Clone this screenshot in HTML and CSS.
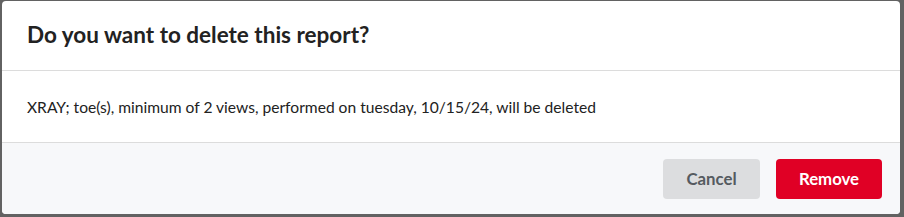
FILE: index.html
```html
<!DOCTYPE html>
<html lang="en">

<head>
    <meta charset="UTF-8" />
    <meta name="viewport" content="width=device-width, initial-scale=1.0" />
    <title>Delete report</title>
    <link rel="stylesheet" href="styles.css">
</head>

<body>
    <div class="modal" role="dialog" aria-labelledby="modalTitle">
        <div class="modal-header">
            <h2 id="modalTitle">Do you want to delete this report?</h2>
        </div>
        <div class="modal-body">
            <p>XRAY; toe(s), minimum of 2 views, performed on tuesday, 10/15/24, will be deleted</p>
        </div>
        <div class="modal-footer">
            <button type="button" class="btn btn-cancel">Cancel</button>
            <button type="button" class="btn btn-remove">Remove</button>
        </div>
    </div>
</body>

</html>
```

FILE: styles.css
```css
* {
    margin: 0;
    padding: 0;
    box-sizing: border-box;
    font-family: Lato, 'Noto Sans', sans-serif;
}

body {
    background: #626262;
    padding: 1px 4px 3px 2px;
    min-height: 100vh;
}

.modal {
    background: #ffffff;
    border-radius: 4px;
    overflow: hidden;
    width: 898px;
    color: #222222;
}

.modal-header {
    height: 70px;
    padding: 0 25px;
    display: flex;
    align-items: center;
    border-bottom: 1px solid #dcdcdc;
}

.modal-header h2 {
    font-size: 22.5px;
    font-weight: 700;
    color: #222222;
    padding-bottom: 2px;
}

.modal-body {
    height: 72px;
    padding: 0 25px;
    display: flex;
    align-items: center;
    border-bottom: 1px solid #dcdcdc;
}

.modal-body p {
    font-size: 15.6px;
    color: #222222;
}

.modal-footer {
    background: #f7f8fa;
    height: 71px;
    padding: 0 18px 0 0;
    display: flex;
    justify-content: flex-end;
    align-items: center;
    gap: 16px;
}

.btn {
    height: 40px;
    border: none;
    border-radius: 4px;
    font-size: 16.8px;
    font-weight: 700;
    cursor: pointer;
}

.btn-cancel {
    width: 97px;
    background: #dcdddf;
    color: #555a60;
}

.btn-remove {
    width: 106px;
    background: #e00025;
    color: #ffffff;
}
```
